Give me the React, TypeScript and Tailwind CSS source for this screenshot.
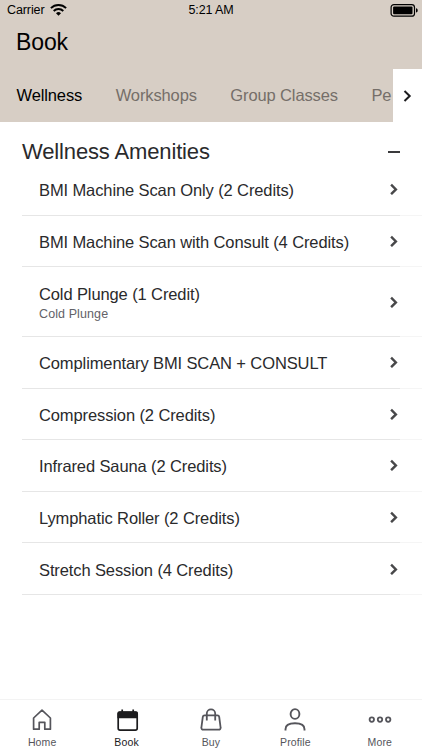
import clsx from "clsx";

interface Service {
  name: string;
  note?: string;
}

const services: Service[] = [
  { name: "BMI Machine Scan Only (2 Credits)" },
  { name: "BMI Machine Scan with Consult (4 Credits)" },
  { name: "Cold Plunge (1 Credit)", note: "Cold Plunge" },
  { name: "Complimentary BMI SCAN + CONSULT" },
  { name: "Compression (2 Credits)" },
  { name: "Infrared Sauna (2 Credits)" },
  { name: "Lymphatic Roller (2 Credits)" },
  { name: "Stretch Session (4 Credits)" },
];

function StatusBar() {
  return (
    <div className="flex h-5 items-center text-[12.5px] leading-5 tracking-[-0.1px]">
      <div className="flex flex-1 items-center gap-[5px] pl-[7px]">
        <span>Carrier</span>
        <svg width="17" height="12" viewBox="0 0 17 12" fill="none" stroke="currentColor" strokeWidth="1.9">
          <path d="M.9 4.2a10.8 10.8 0 0 1 15.2 0" />
          <path d="M3.7 7a6.8 6.8 0 0 1 9.6 0" />
          <path d="M8.5 11.7 6 9.2a3.6 3.6 0 0 1 5 0z" fill="currentColor" stroke="none" />
        </svg>
      </div>
      <span className="-ml-[3px]">5:21 AM</span>
      <div className="flex flex-1 justify-end pr-[4px]">
        <svg width="28" height="13" viewBox="0 0 28 13">
          <rect x="1.1" y=".6" width="23.4" height="11.6" rx="2.8" fill="none" stroke="currentColor" strokeWidth="1.2" />
          <rect x="3.1" y="2.6" width="19.4" height="7.6" rx="1" fill="currentColor" />
          <path d="M26 4.3c1.2.3 1.7 1.1 1.7 2.1s-.5 1.8-1.7 2.1z" fill="currentColor" />
        </svg>
      </div>
    </div>
  );
}

function Tabs() {
  return (
    <div className="flex h-[53px] text-[16.5px] tracking-[-0.12px]">
      <div className="flex flex-1 items-center gap-[33.5px] overflow-hidden pl-[16.5px] whitespace-nowrap text-[#756e69]">
        <span className="text-black">Wellness</span>
        <span>Workshops</span>
        <span>Group Classes</span>
        <span>Pe</span>
      </div>
      <button className="flex w-[29px] items-center justify-center bg-white">
        <svg width="9" height="14" viewBox="0 0 9 14" fill="none" stroke="#1c1c1e" strokeWidth="2">
          <path d="m1.5 2 5.2 5-5.2 5" />
        </svg>
      </button>
    </div>
  );
}

function ServiceRow({ service }: { service: Service }) {
  return (
    <li className="ml-[22px]">
      <div
        className={clsx(
          "flex items-center pl-[17px] pr-6",
          service.note ? "h-[68.6px]" : "h-[50.65px]",
        )}
      >
        <div className={clsx("flex-1", service.note ? "pt-[3px]" : "pt-[2px]")}>
          <p className="text-[16.5px] leading-[22px] tracking-[-0.11px] whitespace-nowrap">{service.name}</p>
          {service.note && (
            <p className="text-[12.5px] leading-[18px] tracking-[0.1px] text-[#626268]">
              {service.note}
            </p>
          )}
        </div>
        <svg width="8" height="12" viewBox="0 0 8 12" fill="none" stroke="#48484a" strokeWidth="2.4">
          <path d="m1.1 1.6 4.8 4.8-4.8 4.8" />
        </svg>
      </div>
      <div className="flex h-px">
        <div className="w-[378px] bg-[#e6e6e6]" />
        <div className="flex-1 bg-[#f5f5f5]" />
      </div>
    </li>
  );
}

function HomeIcon() {
  return (
    <svg width="24" height="24" viewBox="0 0 24 24" fill="none" stroke="currentColor" strokeWidth="1.7" strokeLinejoin="round">
      <path d="M3.6 10 12 2.2l8.4 7.8v11.2h-5.6v-6.9H9.2v6.9H3.6z" />
    </svg>
  );
}

function BookIcon() {
  return (
    <svg width="24" height="24" viewBox="0 0 24 24" fill="none" stroke="currentColor" strokeWidth="1.7">
      <rect x="3.2" y="4.3" width="19" height="17.8" rx="1.8" />
      <path d="M2.4 10.2V5.2A2 2 0 0 1 4.4 3.2H21a2 2 0 0 1 2 2v5z" fill="currentColor" stroke="none" />
      <path d="M7.2 4V1.4M18.2 4V1.4" />
    </svg>
  );
}

function BuyIcon() {
  return (
    <svg width="24" height="24" viewBox="0 0 24 24" fill="none" stroke="currentColor" strokeWidth="1.8" strokeLinejoin="round">
      <path d="M5.6 7.4h12.8a1.8 1.8 0 0 1 1.8 1.5l1.4 10.6a1.9 1.9 0 0 1-1.9 2.2H4.3a1.9 1.9 0 0 1-1.9-2.2L3.8 8.9a1.8 1.8 0 0 1 1.8-1.5z" />
      <path d="M7.8 12.6V5.6a4.2 4.2 0 0 1 8.4 0v7" />
    </svg>
  );
}

function ProfileIcon() {
  return (
    <svg width="24" height="24" viewBox="0 0 24 24" fill="none" stroke="currentColor" strokeWidth="1.9">
      <ellipse cx="12" cy="6" rx="4.4" ry="4.9" />
      <path d="M2.5 22.5v-1.3c0-3.8 3.5-5.9 9.5-5.9s9.5 2.1 9.5 5.9v1.3" />
    </svg>
  );
}

function MoreIcon() {
  return (
    <svg width="24" height="24" viewBox="0 0 24 24" fill="none" stroke="currentColor" strokeWidth="1.8">
      <circle cx="3.8" cy="11.6" r="2.2" />
      <circle cx="12" cy="11.6" r="2.2" />
      <circle cx="20.2" cy="11.6" r="2.2" />
    </svg>
  );
}

const navItems = [
  { label: "Home", Icon: HomeIcon },
  { label: "Book", Icon: BookIcon, active: true },
  { label: "Buy", Icon: BuyIcon },
  { label: "Profile", Icon: ProfileIcon },
  { label: "More", Icon: MoreIcon },
];

export default function App() {
  return (
    <div className="flex h-[750px] w-[422px] flex-col overflow-hidden bg-white font-['Liberation_Sans',Arial,sans-serif] text-[#2a2a2c]">
      <header className="h-[122px] bg-[#d7cec5] text-black">
        <StatusBar />
        <h1 className="h-[49px] pt-2 pl-4 text-[23px] leading-7 tracking-[-0.1px]">Book</h1>
        <Tabs />
      </header>

      <main className="flex-1">
        <div className="flex h-[42px] items-center justify-between pt-[18px] pr-[22px] pl-[22px]">
          <h2 className="text-[22px] leading-6 tracking-[-0.14px]">Wellness Amenities</h2>
          <div className="h-[1.5px] w-3 bg-[#3a3a3c]" />
        </div>
        <ul>
          {services.map((service) => (
            <ServiceRow key={service.name} service={service} />
          ))}
        </ul>
      </main>

      <nav className="grid h-[51px] grid-cols-5 border-t border-[#f3f3f3]">
        {navItems.map(({ label, Icon, active }) => (
          <div
            key={label}
            className={clsx(
              "flex flex-col items-center pt-2",
              active ? "text-[#1c1c1e]" : "text-[#55555b]",
            )}
          >
            <Icon />
            <span className="mt-1 text-[10.5px] leading-3 tracking-[0.15px]">{label}</span>
          </div>
        ))}
      </nav>
    </div>
  );
}
